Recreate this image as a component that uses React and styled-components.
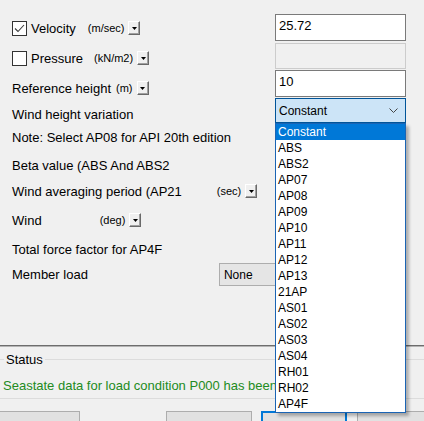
import styled, { createGlobalStyle } from "styled-components";

const GlobalStyle = createGlobalStyle`
  html, body {
    margin: 0;
    padding: 0;
    background: #f0f0f0;
  }
  body {
    font-family: "Liberation Sans", Arial, sans-serif;
    color: #000;
  }
`;

const options = [
  "Constant",
  "ABS",
  "ABS2",
  "AP07",
  "AP08",
  "AP09",
  "AP10",
  "AP11",
  "AP12",
  "AP13",
  "21AP",
  "AS01",
  "AS02",
  "AS03",
  "AS04",
  "RH01",
  "RH02",
  "AP4F",
];

function CheckBox({ checked }) {
  return (
    <Box>
      {checked && (
        <svg width="13" height="13" viewBox="0 0 13 13">
          <polyline
            points="2,6.5 5,9.5 11,3"
            fill="none"
            stroke="#3a3a3a"
            strokeWidth="1.1"
          />
        </svg>
      )}
    </Box>
  );
}

function DropButton() {
  return (
    <SmallDrop>
      <svg width="5" height="3" viewBox="0 0 5 3">
        <polygon points="0,0 5,0 2.5,3" fill="#000" />
      </svg>
    </SmallDrop>
  );
}

export default function App() {
  return (
    <Window>
      <GlobalStyle />
      <FormArea>
        <LeftCol>
          <Row>
            <CheckBox checked />
            <Label $ml={4}>Velocity</Label>
            <Unit $ml={12}>(m/sec)</Unit>
            <DropButton />
          </Row>
          <Row $gap={8}>
            <CheckBox />
            <Label $ml={4}>Pressure</Label>
            <Unit $ml={11}>(kN/m2)</Unit>
            <DropButton />
          </Row>
          <Row $gap={8}>
            <Label>Reference height</Label>
            <Unit $ml={5}>(m)</Unit>
            <DropButton />
          </Row>
          <Row $gap={4}>
            <Label>Wind height variation</Label>
          </Row>
          <Row $gap={1}>
            <Label>Note: Select AP08 for API 20th edition</Label>
          </Row>
          <Row $gap={6}>
            <Label>Beta value (ABS And ABS2</Label>
          </Row>
          <Row $gap={4}>
            <Label>Wind averaging period (AP21</Label>
            <Unit $ml={35}>(sec)</Unit>
            <DropButton />
          </Row>
          <Row $gap={7}>
            <Label>Wind</Label>
            <Unit $ml={58}>(deg)</Unit>
            <DropButton />
          </Row>
          <Row $gap={7}>
            <Label>Total force factor for AP4F</Label>
          </Row>
          <Row $gap={3}>
            <Label>Member load</Label>
            <GreyCombo>None</GreyCombo>
          </Row>
        </LeftCol>

        <RightCol>
          <TextBox>25.72</TextBox>
          <TextBox $disabled $gap={2} $h={26} />
          <TextBox $gap={1}>10</TextBox>
          <ComboWrap>
            <Combo>
              Constant
              <svg width="9" height="5" viewBox="0 0 9 5">
                <polyline
                  points="0.5,0.5 4.5,4.5 8.5,0.5"
                  fill="none"
                  stroke="#444"
                  strokeWidth="1"
                />
              </svg>
            </Combo>
            <DropList>
              {options.map((o, i) => (
                <Option key={o} $active={i === 0}>
                  {o}
                </Option>
              ))}
            </DropList>
          </ComboWrap>
        </RightCol>
      </FormArea>

      <Divider />

      <StatusGroup>
        <Legend>
          <Rule $w="4px" />
          <LegendText>Status</LegendText>
          <Rule />
        </Legend>
        <StatusText>Seastate data for load condition P000 has been</StatusText>
      </StatusGroup>

      <ButtonRow>
        <Button $ml={-6} />
        <Button $ml={86} />
        <Button $ml={9} $focused />
        <Button $ml={10} />
      </ButtonRow>
    </Window>
  );
}

const Window = styled.div`
  width: 424px;
  height: 421px;
  overflow: hidden;
  background: #f0f0f0;
`;

const FormArea = styled.div`
  display: flex;
  height: 345px;
`;

const LeftCol = styled.div`
  width: 263px;
  padding: 17px 0 0 12px;
  display: flex;
  flex-direction: column;
`;

const Row = styled.div`
  height: 22px;
  margin-top: ${(p) => p.$gap || 0}px;
  display: flex;
  align-items: center;
  white-space: nowrap;
`;

const Box = styled.div`
  width: 13px;
  height: 13px;
  border: 1px solid #333;
  background: #fff;
  display: flex;
  flex-shrink: 0;
`;

const Label = styled.span`
  font-size: 13px;
  line-height: 15px;
  margin-left: ${(p) => p.$ml || 0}px;
`;

const Unit = styled.span`
  font-size: 11px;
  line-height: 13px;
  margin-left: ${(p) => p.$ml || 0}px;
  margin-right: 4px;
`;

const SmallDrop = styled.div`
  width: 10px;
  height: 12px;
  background: #f0f0f0;
  border: 1px solid;
  border-color: #fff #696969 #696969 #fff;
  box-shadow: inset -1px -1px 0 #a0a0a0;
  display: flex;
  align-items: center;
  justify-content: center;
  flex-shrink: 0;
`;

const GreyCombo = styled.div`
  margin-left: 131px;
  width: 150px;
  height: 23px;
  flex-shrink: 0;
  box-sizing: border-box;
  background: #e5e5e5;
  border: 1px solid #adadad;
  font-size: 12px;
  line-height: 23px;
  padding-left: 4px;
`;

const RightCol = styled.div`
  width: 131px;
  padding-top: 14px;
  display: flex;
  flex-direction: column;
`;

const TextBox = styled.div`
  box-sizing: border-box;
  height: ${(p) => p.$h || 27}px;
  margin-top: ${(p) => p.$gap || 0}px;
  padding: 3px 3px;
  font-size: 13px;
  line-height: 15px;
  background: ${(p) => (p.$disabled ? "#f0f0f0" : "#fff")};
  border: 1px solid ${(p) => (p.$disabled ? "#cccccc" : "#7a7a7a")};
`;

const ComboWrap = styled.div`
  position: relative;
  margin-top: 1px;
`;

const Combo = styled.div`
  box-sizing: border-box;
  height: 25px;
  padding: 0 7px 0 3px;
  display: flex;
  align-items: center;
  justify-content: space-between;
  font-size: 12px;
  background: #cce4f7;
  border: 1px solid #005499;
`;

const DropList = styled.div`
  position: absolute;
  top: 25px;
  left: 0;
  width: 131px;
  box-sizing: border-box;
  background: #fff;
  border: 1px solid #1a64b4;
  box-shadow: 3px 3px 3px rgba(0, 0, 0, 0.28);
  z-index: 10;
`;

const Option = styled.div`
  height: 16px;
  line-height: 16px;
  padding-left: 2px;
  font-size: 12px;
  background: ${(p) => (p.$active ? "#0078d7" : "transparent")};
  color: ${(p) => (p.$active ? "#fff" : "#000")};
`;

const Divider = styled.div`
  height: 1px;
  background: #6d6d6d;
  border-bottom: 1px solid #b4b4b4;
`;

const StatusGroup = styled.div`
  border-bottom: 1px solid #dcdcdc;
`;

const Legend = styled.div`
  height: 25px;
  display: flex;
  align-items: center;
`;

const Rule = styled.div`
  height: 1px;
  background: #dcdcdc;
  width: ${(p) => p.$w || "auto"};
  flex: ${(p) => (p.$w ? "none" : 1)};
`;

const LegendText = styled.span`
  font-size: 13px;
  padding: 0 2px;
`;

const StatusText = styled.div`
  height: 26px;
  display: flex;
  align-items: center;
  padding-left: 3px;
  font-size: 13px;
  color: #228b22;
  white-space: nowrap;
`;

const ButtonRow = styled.div`
  display: flex;
  margin-top: 12px;
`;

const Button = styled.div`
  width: 86px;
  height: 23px;
  flex-shrink: 0;
  box-sizing: border-box;
  margin-left: ${(p) => p.$ml || 0}px;
  background: #e1e1e1;
  border: ${(p) => (p.$focused ? "2px solid #0078d7" : "1px solid #adadad")};
`;
